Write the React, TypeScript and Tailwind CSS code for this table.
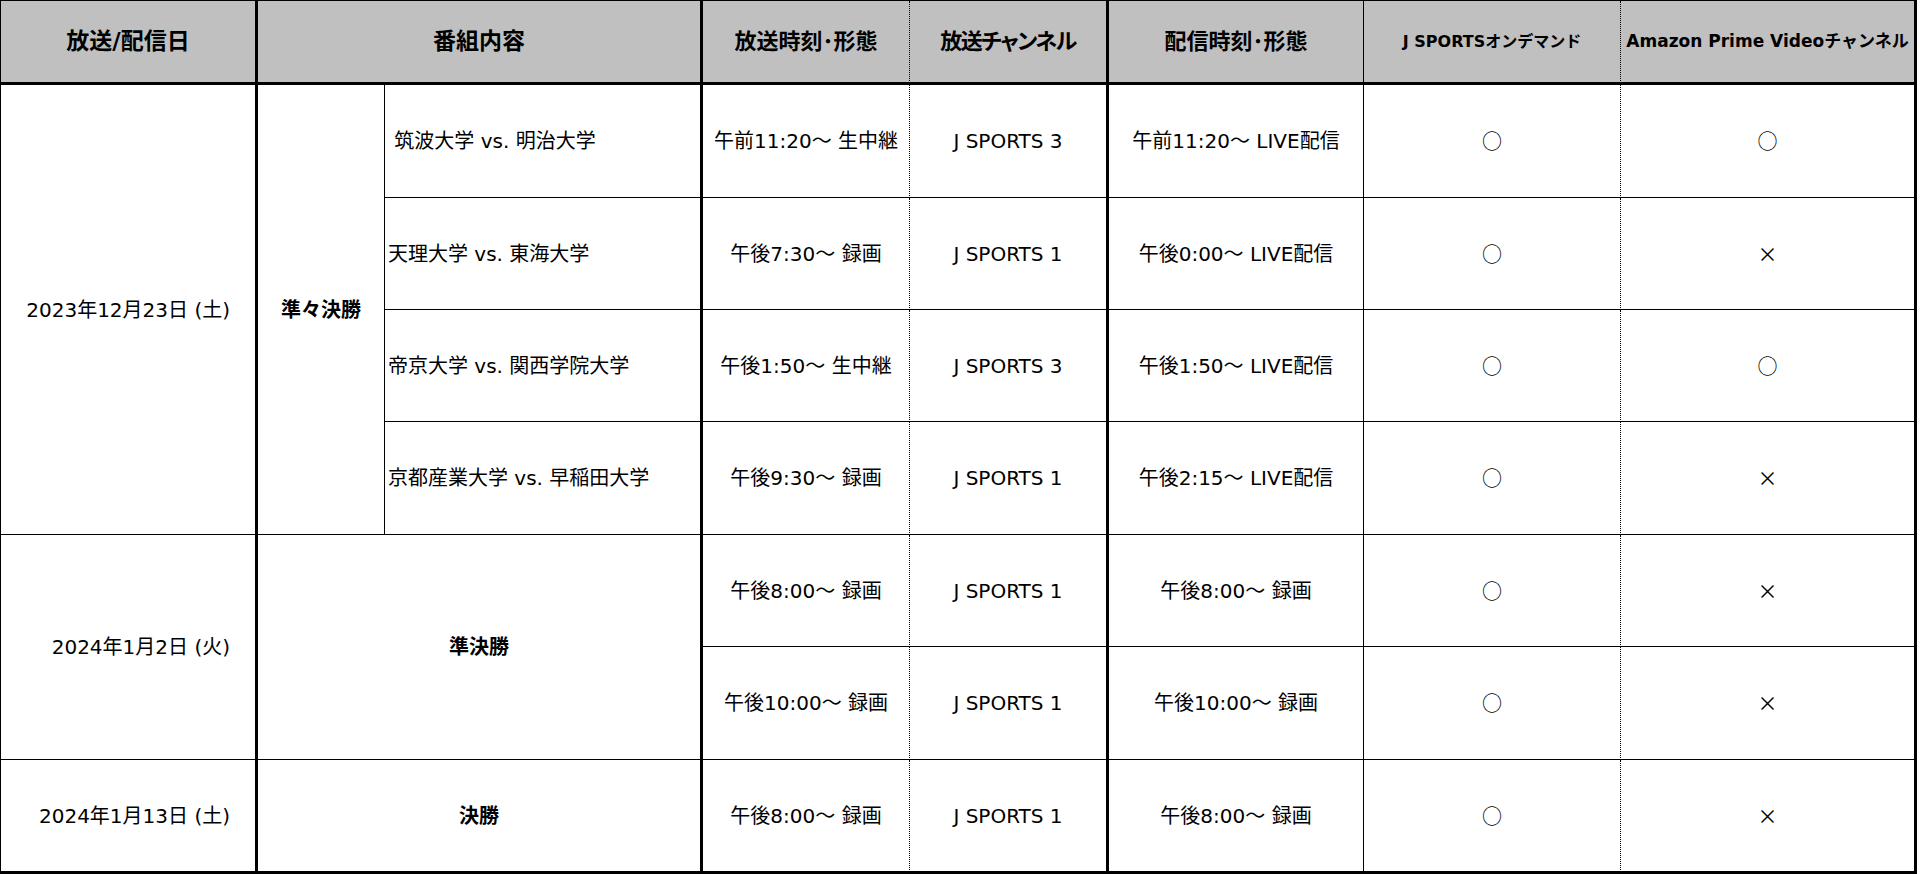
import React from "react";

const FONT = "font-['DejaVu_Sans','Noto_Sans_CJK_JP',sans-serif]";
const CJK = "font-['Noto_Sans_CJK_JP',sans-serif]";

type Row = {
  prog?: string;
  bt: string;
  ch: string;
  st: string;
  od: string;
  am: string;
};

const g1: Row[] = [
  { prog: " 筑波大学 vs. 明治大学", bt: "午前11:20～ 生中継", ch: "J SPORTS 3", st: "午前11:20～ LIVE配信", od: "○", am: "○" },
  { prog: "天理大学 vs. 東海大学", bt: "午後7:30～ 録画", ch: "J SPORTS 1", st: "午後0:00～ LIVE配信", od: "○", am: "×" },
  { prog: "帝京大学 vs. 関西学院大学", bt: "午後1:50～ 生中継", ch: "J SPORTS 3", st: "午後1:50～ LIVE配信", od: "○", am: "○" },
  { prog: "京都産業大学 vs. 早稲田大学", bt: "午後9:30～ 録画", ch: "J SPORTS 1", st: "午後2:15～ LIVE配信", od: "○", am: "×" },
];

const g2: Row[] = [
  { bt: "午後8:00～ 録画", ch: "J SPORTS 1", st: "午後8:00～ 録画", od: "○", am: "×" },
  { bt: "午後10:00～ 録画", ch: "J SPORTS 1", st: "午後10:00～ 録画", od: "○", am: "×" },
];

const g3: Row = { bt: "午後8:00～ 録画", ch: "J SPORTS 1", st: "午後8:00～ 録画", od: "○", am: "×" };

const base = "p-0 border-black border-solid align-middle text-center";

function Tail({ r, last }: { r: Row; last?: boolean }) {
  const b = last ? "border-b-[3px]" : "border-b";
  return (
    <>
      <td className={`${base} ${b} border-r [border-right-style:dotted] whitespace-nowrap`}>{r.bt}</td>
      <td className={`${base} ${b} border-r-[3px] whitespace-nowrap`}>{r.ch}</td>
      <td className={`${base} ${b} border-r whitespace-nowrap`}>{r.st}</td>
      <td className={`${base} ${b} border-r [border-right-style:dotted] ${CJK}`}>{r.od}</td>
      <td className={`${base} ${b} border-r-[3px] ${CJK}`}>{r.am}</td>
    </>
  );
}

export default function App() {
  return (
    <div className={`w-[1920px] h-[874px] bg-white text-black ${FONT} text-[20px] leading-none`}>
      <table className="table-fixed border-separate border-spacing-0 border-t border-l border-black border-solid w-[1917px]">
        <colgroup>
          <col className="w-[257px]" />
          <col className="w-[127px]" />
          <col className="w-[318px]" />
          <col className="w-[207px]" />
          <col className="w-[199px]" />
          <col className="w-[255px]" />
          <col className="w-[257px]" />
          <col className="w-[296px]" />
        </colgroup>
        <thead>
          <tr className="h-[84px] bg-[#c0c0c0] font-bold">
            <td className={`${base} border-b-[3px] border-r-[3px] text-[23px]`}>放送/配信日</td>
            <td colSpan={2} className={`${base} border-b-[3px] border-r-[3px] text-[23px]`}>番組内容</td>
            <td className={`${base} border-b-[3px] border-r [border-right-style:dotted] text-[22px] whitespace-nowrap`}>放送時刻･形態</td>
            <td className={`${base} border-b-[3px] border-r-[3px] text-[22px] whitespace-nowrap tracking-[-1.5px] [font-feature-settings:'palt']`}>放送チャンネル</td>
            <td className={`${base} border-b-[3px] border-r text-[22px] whitespace-nowrap`}>配信時刻･形態</td>
            <td className={`${base} border-b-[3px] border-r [border-right-style:dotted] text-[16px] whitespace-nowrap`}>J SPORTSオンデマンド</td>
            <td className={`${base} border-b-[3px] border-r-[3px] text-[17px] whitespace-nowrap`}>Amazon Prime Videoチャンネル</td>
          </tr>
        </thead>
        <tbody>
          {g1.map((r, i) => (
            <tr key={i} className={i === 0 || i === 3 ? "h-[113px]" : "h-[112px]"}>
              {i === 0 && (
                <>
                  <td rowSpan={4} className={`${base} border-b border-r-[3px] text-right pr-[25px] whitespace-nowrap`}>
                    2023年12月23日 (土)
                  </td>
                  <td rowSpan={4} className={`${base} border-b border-r font-bold`}>
                    準々決勝
                  </td>
                </>
              )}
              <td className={`${base} border-b border-r-[3px] text-left pl-[3px] whitespace-pre`}>{r.prog}</td>
              <Tail r={r} />
            </tr>
          ))}
          {g2.map((r, i) => (
            <tr key={i} className={i === 0 ? "h-[112px]" : "h-[113px]"}>
              {i === 0 && (
                <>
                  <td rowSpan={2} className={`${base} border-b border-r-[3px] text-right pr-[25px] whitespace-nowrap`}>
                    2024年1月2日 (火)
                  </td>
                  <td rowSpan={2} colSpan={2} className={`${base} border-b border-r-[3px] font-bold`}>
                    準決勝
                  </td>
                </>
              )}
              <Tail r={r} />
            </tr>
          ))}
          <tr className="h-[114px]">
            <td className={`${base} border-b-[3px] border-r-[3px] text-right pr-[25px] whitespace-nowrap`}>
              2024年1月13日 (土)
            </td>
            <td colSpan={2} className={`${base} border-b-[3px] border-r-[3px] font-bold`}>
              決勝
            </td>
            <Tail r={g3} last />
          </tr>
        </tbody>
      </table>
    </div>
  );
}
